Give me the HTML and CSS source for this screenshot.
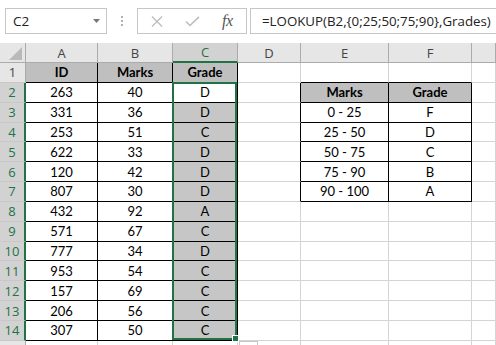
FILE: index.html
```html
<!DOCTYPE html>
<html>
<head>
<meta charset="utf-8">
<link rel="stylesheet" href="styles.css">
</head>
<body>
<div class="fbar">
  <div class="namebox"><span>C2</span><svg class="dd" width="7" height="4" viewBox="0 0 7 4"><path d="M0 0H7L3.5 4Z" fill="#777"/></svg></div>
  <div class="grip"><i></i><i></i><i></i></div>
  <div class="icons">
    <svg class="ix" width="12" height="11" viewBox="0 0 12 11"><path d="M1 .5L11 10.5M11 .5L1 10.5" stroke="#bdbdbd" stroke-width="1.3" fill="none"/></svg>
    <svg class="iv" width="15" height="11" viewBox="0 0 15 11"><path d="M1 5.5L5 9.5L14 .8" stroke="#bdbdbd" stroke-width="1.6" fill="none"/></svg>
    <span class="fx">fx</span>
  </div>
  <div class="formula">=LOOKUP(B2,{0;25;50;75;90},Grades)</div>
</div>
<div class="sheet">
  <div class="ch corner"><svg width="13" height="13" viewBox="0 0 13 13"><path d="M13 0V13H0Z" fill="#b9b9b9"/></svg></div>
  <div class="ch">A</div><div class="ch">B</div><div class="ch on">C</div><div class="ch">D</div><div class="ch">E</div><div class="ch">F</div><div class="ch"></div>

  <div class="rh">1</div>
  <div class="c t h">ID</div><div class="c t h">Marks</div><div class="c t h">Grade</div><div class="c"></div><div class="c bb"></div><div class="c bb"></div><div class="c"></div>

  <div class="rh on">2</div>
  <div class="c t">263</div><div class="c t">40</div><div class="c t">D</div><div class="c br"></div><div class="c t h">Marks</div><div class="c t h">Grade</div><div class="c"></div>

  <div class="rh on">3</div>
  <div class="c t">331</div><div class="c t">36</div><div class="c t s">D</div><div class="c br"></div><div class="c t">0 - 25</div><div class="c t">F</div><div class="c"></div>

  <div class="rh on">4</div>
  <div class="c t">253</div><div class="c t">51</div><div class="c t s">C</div><div class="c br"></div><div class="c t">25 - 50</div><div class="c t">D</div><div class="c"></div>

  <div class="rh on">5</div>
  <div class="c t">622</div><div class="c t">33</div><div class="c t s">D</div><div class="c br"></div><div class="c t">50 - 75</div><div class="c t">C</div><div class="c"></div>

  <div class="rh on">6</div>
  <div class="c t">120</div><div class="c t">42</div><div class="c t s">D</div><div class="c br"></div><div class="c t">75 - 90</div><div class="c t">B</div><div class="c"></div>

  <div class="rh on">7</div>
  <div class="c t">807</div><div class="c t">30</div><div class="c t s">D</div><div class="c br"></div><div class="c t">90 - 100</div><div class="c t">A</div><div class="c"></div>

  <div class="rh on">8</div>
  <div class="c t">432</div><div class="c t">92</div><div class="c t s">A</div><div class="c"></div><div class="c"></div><div class="c"></div><div class="c"></div>

  <div class="rh on">9</div>
  <div class="c t">571</div><div class="c t">67</div><div class="c t s">C</div><div class="c"></div><div class="c"></div><div class="c"></div><div class="c"></div>

  <div class="rh on">10</div>
  <div class="c t">777</div><div class="c t">34</div><div class="c t s">D</div><div class="c"></div><div class="c"></div><div class="c"></div><div class="c"></div>

  <div class="rh on">11</div>
  <div class="c t">953</div><div class="c t">54</div><div class="c t s">C</div><div class="c"></div><div class="c"></div><div class="c"></div><div class="c"></div>

  <div class="rh on">12</div>
  <div class="c t">157</div><div class="c t">69</div><div class="c t s">C</div><div class="c"></div><div class="c"></div><div class="c"></div><div class="c"></div>

  <div class="rh on">13</div>
  <div class="c t">206</div><div class="c t">56</div><div class="c t s">C</div><div class="c"></div><div class="c"></div><div class="c"></div><div class="c"></div>

  <div class="rh on">14</div>
  <div class="c t">307</div><div class="c t">50</div><div class="c t s">C</div><div class="c"></div><div class="c"></div><div class="c"></div><div class="c"></div>

  <div class="rh"></div>
  <div class="c"></div><div class="c"></div><div class="c"></div><div class="c"></div><div class="c"></div><div class="c"></div><div class="c"></div>

  <div class="sel"><div class="fh"></div><div class="qa"></div></div>
</div>
</body>
</html>
```
FILE: styles.css
```css
* { box-sizing: border-box; margin: 0; padding: 0; }
html, body { width: 496px; height: 345px; overflow: hidden; background: #fff; }
body { font-family: "Lato", sans-serif; }

.fbar { height: 43px; display: flex; align-items: flex-start; padding: 8px 0 0 5px; }
.namebox { width: 102px; height: 26px; border: 1px solid #c6c6c6; display: flex; align-items: center; justify-content: space-between; padding: 0 6px 0 7px; font-family: "Open Sans", sans-serif; font-size: 13.5px; color: #222; }
.grip { width: 30px; height: 26px; display: flex; flex-direction: column; align-items: center; justify-content: center; gap: 2px; }
.grip i { display: block; width: 2px; height: 2px; background: #b0b0b0; }
.icons { width: 110px; height: 26px; border: 1px solid #c6c6c6; display: flex; align-items: center; }
.ix { margin-left: 13px; }
.iv { margin-left: 22px; }
.fx { margin-left: 22px; font-family: "Liberation Serif", serif; font-style: italic; font-size: 16px; color: #555; letter-spacing: -0.5px; }
.formula { flex: 1; height: 26px; margin-left: 3px; border: 1px solid #c6c6c6; border-right: none; padding-left: 11px; display: flex; align-items: center; font-family: "Open Sans", sans-serif; font-size: 13.3px; color: #222; white-space: nowrap; }

.sheet { position: relative; display: grid; grid-template-columns: 26px 72px 75px 65px 63px 88px 83px 1fr; grid-template-rows: 20px repeat(15, 19.85px); }
.ch { background: #e6e6e6; border-right: 1px solid #ababab; border-bottom: 1px solid #ababab; display: flex; align-items: center; justify-content: center; font-family: "Open Sans", sans-serif; font-size: 13px; color: #444; }
.ch.on { background: #d2d2d2; color: #217346; border-bottom: 2px solid #217346; }
.corner { justify-content: flex-end; align-items: flex-end; padding: 0 3px 2px 0; }
.rh { background: #e6e6e6; border-right: 1px solid #ababab; border-bottom: 1px solid #c8c8c8; display: flex; align-items: center; justify-content: center; font-family: "Open Sans", sans-serif; font-size: 13px; color: #444; }
.rh.on { background: #d2d2d2; color: #217346; border-right: 2px solid #217346; }

.c { border-right: 1px solid #d4d4d4; border-bottom: 1px solid #d4d4d4; display: flex; align-items: center; justify-content: center; font-size: 13px; color: #000; white-space: nowrap; }
.c.t { border-right-color: #000; border-bottom-color: #000; }
.c.h { background: #bfbfbf; font-weight: 700; }
.c.s { background: #c6c6c6; }
.c.br { border-right-color: #000; }
.c.bb { border-bottom-color: #000; }

.sel { position: absolute; grid-column: 4 / 5; grid-row: 3 / 16; top: -1px; left: -1px; right: 1px; bottom: 1px; border: 2px solid #217346; }
.fh { position: absolute; right: -4px; bottom: -4px; width: 7px; height: 7px; background: #217346; border: 1px solid #fff; }
.qa { position: absolute; left: calc(100% + 4px); top: calc(100% + 3px); width: 19px; height: 12px; border: 1px solid #c6c6c6; background: #fff; }
```
